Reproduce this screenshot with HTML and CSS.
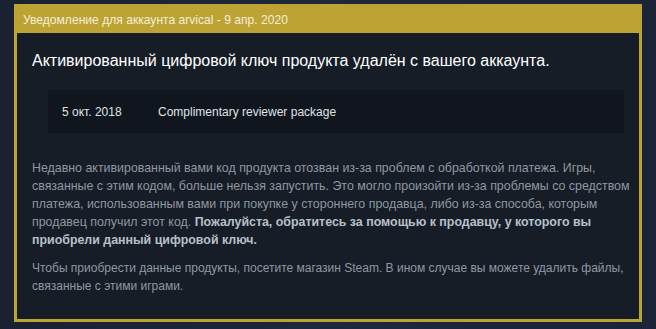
FILE: index.html
```html
<!DOCTYPE html>
<html lang="ru">
<head>
  <meta charset="UTF-8" />
  <title>Уведомление</title>
  <link rel="stylesheet" href="styles.css">
</head>
<body>
  <div class="page">
    <div class="notice">
      <div class="notice-head">Уведомление для аккаунта arvical - 9 апр. 2020</div>
      <div class="notice-body">
        <h2>Активированный цифровой ключ продукта удалён с вашего аккаунта.</h2>

        <div class="keys">
          <div class="key-row">
            <span class="key-date">5 окт. 2018</span>
            <span class="key-name">Complimentary reviewer package</span>
          </div>
        </div>

        <p>Недавно активированный вами код продукта отозван из-за проблем с обработкой платежа. Игры, связанные с этим кодом, больше нельзя запустить. Это могло произойти из-за проблемы со средством платежа, использованным вами при покупке у стороннего продавца, либо из-за способа, которым продавец получил этот код. <b>Пожалуйста, обратитесь за помощью к продавцу, у которого вы приобрели данный цифровой ключ.</b></p>
        <p class="small">Чтобы приобрести данные продукты, посетите магазин Steam. В ином случае вы можете удалить файлы, связанные с этими играми.</p>
      </div>
    </div>
  </div>
</body>
</html>
```

FILE: styles.css
```css
:root {
  --gold: #bda234;
  --page-bg: #1d2637;
  --panel-bg: #161d27;
  --key-bg: #11161e;
  --text: #8f98a0;
}

* {
  box-sizing: border-box;
}

body {
  margin: 0;
  background: linear-gradient(90deg, #1a2131, #1e283a 50%, #1c2537);
  font-family: Arial, "Liberation Sans", sans-serif;
  color: var(--text);
  height: 329px;
}

.page {
  padding: 4px 14px;
}

.notice {
  width: 628px;
  height: 318px;
  border: 3px solid var(--gold);
  background: var(--panel-bg);
  display: flex;
  flex-direction: column;
}

.notice-head {
  background: var(--gold);
  color: #f4efd8;
  font-size: 12.1px;
  height: 26px;
  line-height: 26px;
  padding: 0 6px;
}

.notice-body {
  flex: 1;
  padding: 0 7px 0 15px;
}

h2 {
  margin: 0;
  padding-top: 18px;
  font-weight: normal;
  font-size: 16px;
  line-height: 20px;
  color: #ffffff;
}

.keys {
  margin: 19px 8px 26px 16px;
  background: var(--key-bg);
}

.key-row {
  display: flex;
  height: 43px;
  align-items: center;
  padding-left: 14px;
  font-size: 12px;
  color: #dfe3e6;
}

.key-date {
  width: 96px;
}

p {
  margin: 0 0 10px;
  font-size: 12.4px;
  line-height: 18px;
}

p.small {
  font-size: 12px;
}

p b {
  color: #b7c0c8;
}
```
